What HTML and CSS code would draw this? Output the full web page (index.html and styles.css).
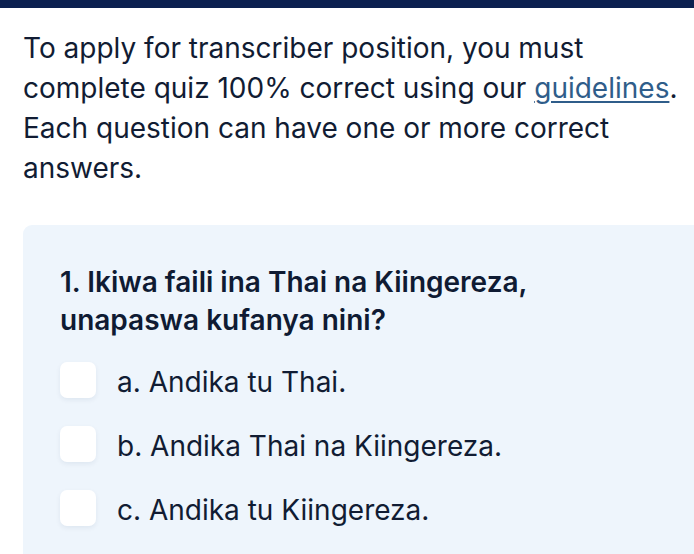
FILE: index.html
```html
<!DOCTYPE html>
<html>
<head>
<meta charset="utf-8">
<link rel="stylesheet" href="styles.css">
</head>
<body>
<div class="topbar"></div>
<p class="intro">To apply for transcriber position, you must complete quiz 100% correct using our <a href="#" class="link">guidelines</a>. Each question can have one or more correct answers.</p>
<section class="card">
  <h2 class="question">1. Ikiwa faili ina Thai na Kiingereza, unapaswa kufanya nini?</h2>
  <ul class="options">
    <li class="option"><span class="box"></span><span class="label">a. Andika tu Thai.</span></li>
    <li class="option"><span class="box"></span><span class="label">b. Andika Thai na Kiingereza.</span></li>
    <li class="option"><span class="box"></span><span class="label">c. Andika tu Kiingereza.</span></li>
  </ul>
</section>
</body>
</html>
```

FILE: styles.css
```css
html, body {
  margin: 0;
  padding: 0;
  background: #ffffff;
  overflow: hidden;
}
body {
  font-family: Inter, "Noto Sans", sans-serif;
  color: #111c33;
  width: 694px;
  height: 554px;
}
.topbar {
  height: 8px;
  background: #0b2050;
}
.intro {
  margin: 20px 10px 0 23px;
  font-size: 28px;
  line-height: 40px;
  font-weight: 400;
}
.link {
  color: #2f5d8a;
  text-decoration: underline;
  text-underline-offset: 3px;
  text-decoration-thickness: 2px;
}
.card {
  margin: 37px 0 0 23px;
  background: #eef5fc;
  border-radius: 9px 0 0 0;
  padding: 38px 20px 30px 37px;
}
.question {
  margin: 0;
  font-size: 28px;
  line-height: 38px;
  font-weight: 600;
  color: #0f1b33;
  max-width: 560px;
}
.options {
  list-style: none;
  margin: 23px 0 0 0;
  padding: 0;
  display: flex;
  flex-direction: column;
  gap: 28px;
}
.option {
  display: flex;
  align-items: flex-start;
  gap: 21px;
  height: 36px;
}
.box {
  width: 36px;
  height: 36px;
  background: #ffffff;
  border-radius: 7px;
  box-shadow: 0 2px 5px rgba(20, 40, 80, 0.07);
  flex: none;
}
.label {
  font-size: 28px;
  line-height: 40px;
  color: #111c33;
}
```
